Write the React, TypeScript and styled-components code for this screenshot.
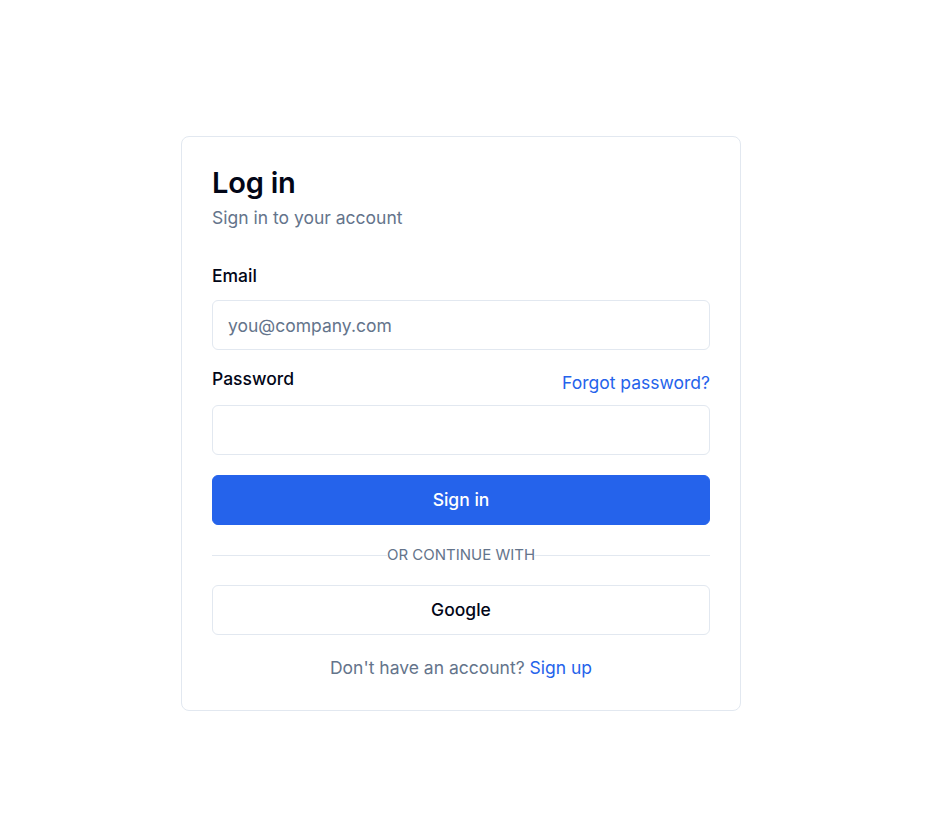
import styled, { createGlobalStyle } from 'styled-components';

const GlobalStyle = createGlobalStyle`
	* {
		box-sizing: border-box;
	}
	body {
		margin: 0;
		background: #ffffff;
		font-family: Inter, 'Noto Sans', sans-serif;
		color: #0f172a;
	}
`;

const Page = styled.main`
	display: flex;
	justify-content: center;
	padding: 136px 6px 0 0;
`;

const Card = styled.section`
	width: 560px;
	padding: 30px 30px 29px;
	border: 1px solid #e2e8f0;
	border-radius: 8px;
	background: #ffffff;
	display: flex;
	flex-direction: column;
`;

const Title = styled.h1`
	margin: 0;
	font-size: 29px;
	line-height: 32px;
	font-weight: 600;
	color: #020617;
	letter-spacing: -0.2px;
`;

const Subtitle = styled.p`
	margin: 6px 0 0;
	font-size: 17.5px;
	line-height: 26px;
	color: #64748b;
`;

const Form = styled.form`
	display: flex;
	flex-direction: column;
	margin-top: 32px;
`;

const Field = styled.div<{ $last?: boolean }>`
	display: flex;
	flex-direction: column;
	gap: 11px;
	margin-bottom: ${(p) => (p.$last ? '20px' : '16px')};
`;

const LabelRow = styled.div`
	display: flex;
	justify-content: space-between;
	align-items: flex-end;
	margin-bottom: -2px;
`;

const Label = styled.label<{ $lifted?: boolean }>`
	font-size: 17.5px;
	line-height: 26px;
	font-weight: 500;
	color: #020617;
	margin-bottom: ${(p) => (p.$lifted ? '4px' : '0')};
`;

const TextLink = styled.a`
	font-size: 17.5px;
	line-height: 26px;
	color: #2563eb;
	text-decoration: none;
	cursor: pointer;
`;

const Input = styled.input`
	height: 50px;
	width: 100%;
	padding: 0 15px;
	border: 1px solid #e2e8f0;
	border-radius: 6px;
	font-family: inherit;
	font-size: 17.5px;
	color: #0f172a;
	background: #ffffff;
	outline: none;

	&::placeholder {
		color: #64748b;
	}
`;

const Button = styled.button<{ $variant?: 'primary' | 'outline' }>`
	height: 50px;
	width: 100%;
	padding: 0 0 1px;
	border-radius: 6px;
	font-family: inherit;
	font-size: 17.5px;
	font-weight: 500;
	cursor: pointer;
	border: 1px solid ${(p) => (p.$variant === 'outline' ? '#e2e8f0' : '#2563eb')};
	background: ${(p) => (p.$variant === 'outline' ? '#ffffff' : '#2563eb')};
	color: ${(p) => (p.$variant === 'outline' ? '#020617' : '#ffffff')};
`;

const Divider = styled.div`
	display: flex;
	align-items: center;
	margin: 21px 0 21px;
	font-size: 15px;
	line-height: 18px;
	color: #64748b;
	text-transform: uppercase;

	&::before,
	&::after {
		content: '';
		flex: 1;
		height: 1px;
		background: #e2e8f0;
	}
`;

const Footer = styled.p`
	margin: 20px 0 0;
	text-align: center;
	font-size: 17.5px;
	line-height: 26px;
	color: #64748b;
`;

export default function App() {
	return (
		<>
			<GlobalStyle />
			<Page>
				<Card>
					<Title>Log in</Title>
					<Subtitle>Sign in to your account</Subtitle>

					<Form onSubmit={(e) => e.preventDefault()}>
						<Field>
							<Label htmlFor='email'>Email</Label>
							<Input id='email' type='email' placeholder='you@company.com' />
						</Field>

						<Field $last>
							<LabelRow>
								<Label htmlFor='password' $lifted>
									Password
								</Label>
								<TextLink>Forgot password?</TextLink>
							</LabelRow>
							<Input id='password' type='password' />
						</Field>

						<Button type='submit'>Sign in</Button>
					</Form>

					<Divider>or continue with</Divider>

					<Button type='button' $variant='outline'>
						Google
					</Button>

					<Footer>
						Don't have an account? <TextLink>Sign up</TextLink>
					</Footer>
				</Card>
			</Page>
		</>
	);
}
